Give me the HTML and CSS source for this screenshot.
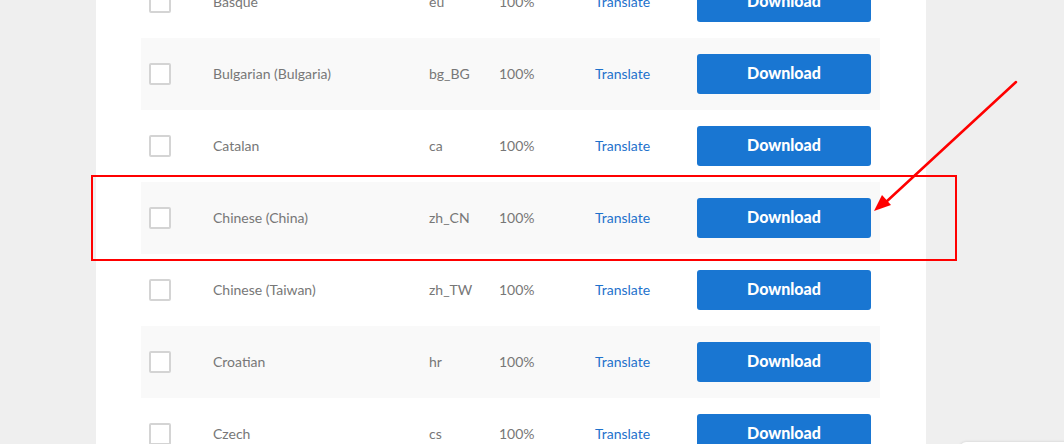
FILE: index.html
```html
<!DOCTYPE html>
<html>
<head>
<meta charset="utf-8">
<link rel="stylesheet" href="styles.css">
</head>
<body>
<div class="page">
  <div class="panel">
    <div class="rows">
      <div class="row"><span class="cb"></span><span class="name">Basque</span><span class="code">eu</span><span class="pct">100%</span><a class="tr">Translate</a><button class="dl">Download</button></div>
      <div class="row alt"><span class="cb"></span><span class="name">Bulgarian (Bulgaria)</span><span class="code">bg_BG</span><span class="pct">100%</span><a class="tr">Translate</a><button class="dl">Download</button></div>
      <div class="row"><span class="cb"></span><span class="name">Catalan</span><span class="code">ca</span><span class="pct">100%</span><a class="tr">Translate</a><button class="dl">Download</button></div>
      <div class="row alt"><span class="cb"></span><span class="name">Chinese (China)</span><span class="code">zh_CN</span><span class="pct">100%</span><a class="tr">Translate</a><button class="dl">Download</button></div>
      <div class="row"><span class="cb"></span><span class="name">Chinese (Taiwan)</span><span class="code">zh_TW</span><span class="pct">100%</span><a class="tr">Translate</a><button class="dl">Download</button></div>
      <div class="row alt"><span class="cb"></span><span class="name">Croatian</span><span class="code">hr</span><span class="pct">100%</span><a class="tr">Translate</a><button class="dl">Download</button></div>
      <div class="row"><span class="cb"></span><span class="name">Czech</span><span class="code">cs</span><span class="pct">100%</span><a class="tr">Translate</a><button class="dl">Download</button></div>
    </div>
  </div>
  <div class="highlight"></div>
  <svg class="arrow" width="1064" height="444" viewBox="0 0 1064 444">
    <line x1="1016" y1="82" x2="886" y2="202" stroke="#f00" stroke-width="2.5" stroke-linecap="round"/>
    <polygon points="874,211 882,195 891,205" fill="#f00"/>
  </svg>
  <div class="widget"></div>
</div>
</body>
</html>
```
FILE: styles.css
```css
html, body {
  margin: 0;
  padding: 0;
  background: #efefef;
  overflow: hidden;
}
.page {
  position: relative;
  width: 1064px;
  height: 444px;
  overflow: hidden;
}
.panel {
  margin-left: 96px;
  width: 830px;
  height: 444px;
  background: #fff;
  overflow: hidden;
}
.rows {
  margin: -34px 46px 0 45px;
  display: flex;
  flex-direction: column;
}
.row {
  height: 72px;
  display: grid;
  grid-template-columns: 64px 216px 70px 96px 102px 174px;
  align-items: center;
  padding-left: 8px;
  font-family: Lato, "Open Sans", sans-serif;
  font-size: 14px;
  color: #777;
}
.row > span:not(.cb), .row > a {
  padding-bottom: 2px;
}
.row.alt {
  background: #f9f9f9;
}
.cb {
  width: 18px;
  height: 18px;
  border: 2px solid #d4d4d4;
  border-radius: 2px;
  background: #fff;
}
.tr {
  color: #1f72cc;
}
.dl {
  width: 174px;
  height: 40px;
  border: none;
  border-radius: 3px;
  background: #1976d2;
  color: #fff;
  font-family: Lato, "Open Sans", sans-serif;
  font-weight: 900;
  font-size: 16px;
  padding: 0 0 3px 0;
}
.highlight {
  position: absolute;
  left: 91px;
  top: 175px;
  width: 862px;
  height: 82px;
  border: 2px solid #f00;
}
.arrow {
  position: absolute;
  left: 0;
  top: 0;
}
.widget {
  position: absolute;
  left: 960px;
  top: 442px;
  width: 140px;
  height: 40px;
  background: #fff;
  border-radius: 6px;
  box-shadow: 0 0 3px rgba(0,0,0,0.15);
}
```
